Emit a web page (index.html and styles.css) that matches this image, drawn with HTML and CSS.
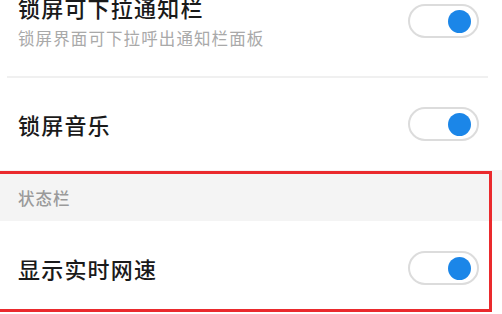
FILE: index.html
```html
<!DOCTYPE html>
<html lang="zh-CN">
<head>
<meta charset="utf-8">
<link rel="stylesheet" href="styles.css">
</head>
<body>
<div class="page">
  <div class="list">
    <div class="row row-tall">
      <div class="text">
        <div class="title">锁屏可下拉通知栏</div>
        <div class="sub">锁屏界面可下拉呼出通知栏面板</div>
      </div>
      <div class="toggle"><span class="knob"></span></div>
    </div>
    <div class="divider"></div>
    <div class="row row-mid">
      <div class="title">锁屏音乐</div>
      <div class="toggle"><span class="knob"></span></div>
    </div>
    <div class="section">状态栏</div>
    <div class="row row-last">
      <div class="title">显示实时网速</div>
      <div class="toggle"><span class="knob"></span></div>
    </div>
  </div>
  <div class="highlight"></div>
</div>
</body>
</html>
```
FILE: styles.css
```css
html, body {
  margin: 0;
  padding: 0;
  background: #ffffff;
}
body {
  width: 502px;
  height: 314px;
  overflow: hidden;
  font-family: "Noto Sans CJK SC", "Noto Sans", sans-serif;
}
.page {
  position: relative;
  width: 502px;
  height: 314px;
  overflow: hidden;
}
.list {
  margin-top: -34px;
  display: flex;
  flex-direction: column;
}
.row {
  display: flex;
  align-items: center;
  justify-content: space-between;
  padding: 0 23px 0 18px;
}
.row-tall { height: 110px; }
.row-mid { height: 92px; }
.row-last { height: 94px; }
.text {
  display: flex;
  flex-direction: column;
  gap: 9px;
}
.title {
  font-size: 22px;
  line-height: 24px;
  font-weight: 500;
  color: #1a1a1a;
  letter-spacing: 1.2px;
}
.sub {
  font-size: 16.5px;
  line-height: 20px;
  color: #a9a9a9;
  letter-spacing: 1.1px;
}
.divider {
  height: 2px;
  background: #f0f0f0;
  margin: 0 14px 0 7px;
}
.section {
  height: 51px;
  box-sizing: border-box;
  padding: 5px 0 0 18px;
  display: flex;
  align-items: center;
  background: #f4f4f4;
  font-size: 16.5px;
  font-weight: 500;
  color: #9a9a9a;
  letter-spacing: 1px;
}
.toggle {
  width: 71px;
  height: 34px;
  box-sizing: border-box;
  border: 2px solid #dcdcdc;
  border-radius: 17px;
  background: #fff;
  display: flex;
  align-items: center;
  justify-content: flex-end;
  padding-right: 6px;
}
.knob {
  width: 23px;
  height: 23px;
  border-radius: 50%;
  background: #1b86e8;
}
.highlight {
  position: absolute;
  left: -3px;
  top: 171px;
  width: 495px;
  height: 141px;
  box-sizing: border-box;
  border: 3px solid #ea2a2d;
}
```
